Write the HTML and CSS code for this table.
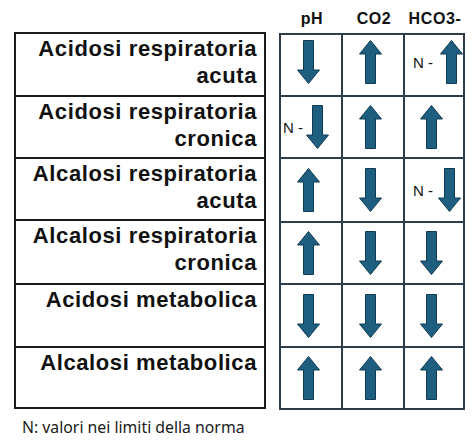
FILE: index.html
```html
<!DOCTYPE html>
<html lang="it">
<head>
    <meta charset="UTF-8">
    <meta name="viewport" content="width=device-width, initial-scale=1.0">
    <title>Equilibrio acido-base</title>
    <link rel="stylesheet" href="styles.css">
</head>
<body>
    <div class="page">
        <div class="labels">
            <div class="label r1">Acidosi respiratoria<br>acuta</div>
            <div class="label r2">Acidosi respiratoria<br>cronica</div>
            <div class="label r3">Alcalosi respiratoria<br>acuta</div>
            <div class="label r4">Alcalosi respiratoria<br>cronica</div>
            <div class="label r5">Acidosi metabolica</div>
            <div class="label r6">Alcalosi metabolica</div>
        </div>

        <div class="values">
            <div class="heads">
                <span>pH</span>
                <span>CO2</span>
                <span>HCO3-</span>
            </div>
            <div class="grid">
                <!-- acidosi respiratoria acuta -->
                <div class="cell first"><svg class="arrow down" viewBox="0 0 23 44"><path d="M11.5 0.5 L22.5 14 L16.5 14 L16.5 43.5 L6.5 43.5 L6.5 14 L0.5 14 Z"/></svg></div>
                <div class="cell first"><svg class="arrow" viewBox="0 0 23 44"><path d="M11.5 0.5 L22.5 14 L16.5 14 L16.5 43.5 L6.5 43.5 L6.5 14 L0.5 14 Z"/></svg></div>
                <div class="cell first norm n-wide"><span>N -</span><svg class="arrow" viewBox="0 0 23 44"><path d="M11.5 0.5 L22.5 14 L16.5 14 L16.5 43.5 L6.5 43.5 L6.5 14 L0.5 14 Z"/></svg></div>

                <!-- acidosi respiratoria cronica -->
                <div class="cell norm n-tight"><span>N -</span><svg class="arrow down" viewBox="0 0 23 44"><path d="M11.5 0.5 L22.5 14 L16.5 14 L16.5 43.5 L6.5 43.5 L6.5 14 L0.5 14 Z"/></svg></div>
                <div class="cell"><svg class="arrow" viewBox="0 0 23 44"><path d="M11.5 0.5 L22.5 14 L16.5 14 L16.5 43.5 L6.5 43.5 L6.5 14 L0.5 14 Z"/></svg></div>
                <div class="cell"><svg class="arrow" viewBox="0 0 23 44"><path d="M11.5 0.5 L22.5 14 L16.5 14 L16.5 43.5 L6.5 43.5 L6.5 14 L0.5 14 Z"/></svg></div>

                <!-- alcalosi respiratoria acuta -->
                <div class="cell"><svg class="arrow" viewBox="0 0 23 44"><path d="M11.5 0.5 L22.5 14 L16.5 14 L16.5 43.5 L6.5 43.5 L6.5 14 L0.5 14 Z"/></svg></div>
                <div class="cell"><svg class="arrow down" viewBox="0 0 23 44"><path d="M11.5 0.5 L22.5 14 L16.5 14 L16.5 43.5 L6.5 43.5 L6.5 14 L0.5 14 Z"/></svg></div>
                <div class="cell norm n-mid"><span>N -</span><svg class="arrow down" viewBox="0 0 23 44"><path d="M11.5 0.5 L22.5 14 L16.5 14 L16.5 43.5 L6.5 43.5 L6.5 14 L0.5 14 Z"/></svg></div>

                <!-- alcalosi respiratoria cronica -->
                <div class="cell"><svg class="arrow" viewBox="0 0 23 44"><path d="M11.5 0.5 L22.5 14 L16.5 14 L16.5 43.5 L6.5 43.5 L6.5 14 L0.5 14 Z"/></svg></div>
                <div class="cell"><svg class="arrow down" viewBox="0 0 23 44"><path d="M11.5 0.5 L22.5 14 L16.5 14 L16.5 43.5 L6.5 43.5 L6.5 14 L0.5 14 Z"/></svg></div>
                <div class="cell"><svg class="arrow down" viewBox="0 0 23 44"><path d="M11.5 0.5 L22.5 14 L16.5 14 L16.5 43.5 L6.5 43.5 L6.5 14 L0.5 14 Z"/></svg></div>

                <!-- acidosi metabolica -->
                <div class="cell"><svg class="arrow down" viewBox="0 0 23 44"><path d="M11.5 0.5 L22.5 14 L16.5 14 L16.5 43.5 L6.5 43.5 L6.5 14 L0.5 14 Z"/></svg></div>
                <div class="cell"><svg class="arrow down" viewBox="0 0 23 44"><path d="M11.5 0.5 L22.5 14 L16.5 14 L16.5 43.5 L6.5 43.5 L6.5 14 L0.5 14 Z"/></svg></div>
                <div class="cell"><svg class="arrow down" viewBox="0 0 23 44"><path d="M11.5 0.5 L22.5 14 L16.5 14 L16.5 43.5 L6.5 43.5 L6.5 14 L0.5 14 Z"/></svg></div>

                <!-- alcalosi metabolica -->
                <div class="cell"><svg class="arrow" viewBox="0 0 23 44"><path d="M11.5 0.5 L22.5 14 L16.5 14 L16.5 43.5 L6.5 43.5 L6.5 14 L0.5 14 Z"/></svg></div>
                <div class="cell"><svg class="arrow" viewBox="0 0 23 44"><path d="M11.5 0.5 L22.5 14 L16.5 14 L16.5 43.5 L6.5 43.5 L6.5 14 L0.5 14 Z"/></svg></div>
                <div class="cell"><svg class="arrow" viewBox="0 0 23 44"><path d="M11.5 0.5 L22.5 14 L16.5 14 L16.5 43.5 L6.5 43.5 L6.5 14 L0.5 14 Z"/></svg></div>
            </div>
        </div>
    </div>
    <p class="note">N: valori nei limiti della norma</p>
</body>
</html>
```

FILE: styles.css
```css
body {
    margin: 0;
    padding: 0 0 0 14px;
    background: #fff;
    font-family: "Liberation Sans", Arial, sans-serif;
    color: #111;
}

.page {
    display: flex;
    gap: 15px;
    align-items: flex-start;
}

.labels {
    width: 252px;
    margin-top: 32px;
    border: 2px solid #1c1c1c;
    box-sizing: border-box;
}

.label {
    box-sizing: border-box;
    border-bottom: 2px solid #1c1c1c;
    padding: 1px 7px 0 0;
    text-align: right;
    font-size: 22px;
    font-weight: bold;
    letter-spacing: 0.6px;
    line-height: 27px;
}

.r1 { height: 63px; }
.r2 { height: 62px; }
.r3 { height: 62px; }
.r4 { height: 64px; }
.r5 { height: 63px; }
.r6 { height: 59px; border-bottom: none; }

.values {
    width: 184px;
}

.heads {
    display: grid;
    grid-template-columns: 62px 62px 60px;
    height: 33px;
    box-sizing: border-box;
    padding-top: 10px;
    font-size: 16px;
    font-weight: bold;
    letter-spacing: 0.6px;
    line-height: 17px;
    text-align: center;
}

.grid {
    display: grid;
    grid-template-columns: 62px 62px 60px;
    grid-template-rows: 62px 62px 64px 62px 63px 62px;
    border-top: 2px solid #2d3e4a;
    border-left: 2px solid #2d3e4a;
    margin-left: -2px;
}

.cell {
    box-sizing: border-box;
    border-right: 2px solid #2d3e4a;
    border-bottom: 2px solid #2d3e4a;
    display: flex;
    align-items: center;
    justify-content: center;
    padding-right: 5px;
}

.cell.first {
    padding-bottom: 6px;
}

.arrow {
    width: 23px;
    height: 44px;
    fill: #1e5f80;
    stroke: #103c53;
    stroke-width: 1;
}

.arrow.down {
    transform: rotate(180deg);
}

.norm {
    justify-content: flex-start;
    padding-right: 0;
    font-size: 15px;
    color: #111;
}

.n-wide { padding-left: 8px; gap: 7px; }
.n-tight { padding-left: 2px; gap: 3px; }
.n-mid { padding-left: 8px; gap: 5px; }

.note {
    margin: 7px 0 0 8px;
    font-family: "Noto Sans", sans-serif;
    font-size: 15.8px;
    line-height: 20px;
    color: #1a1a1a;
}
```
